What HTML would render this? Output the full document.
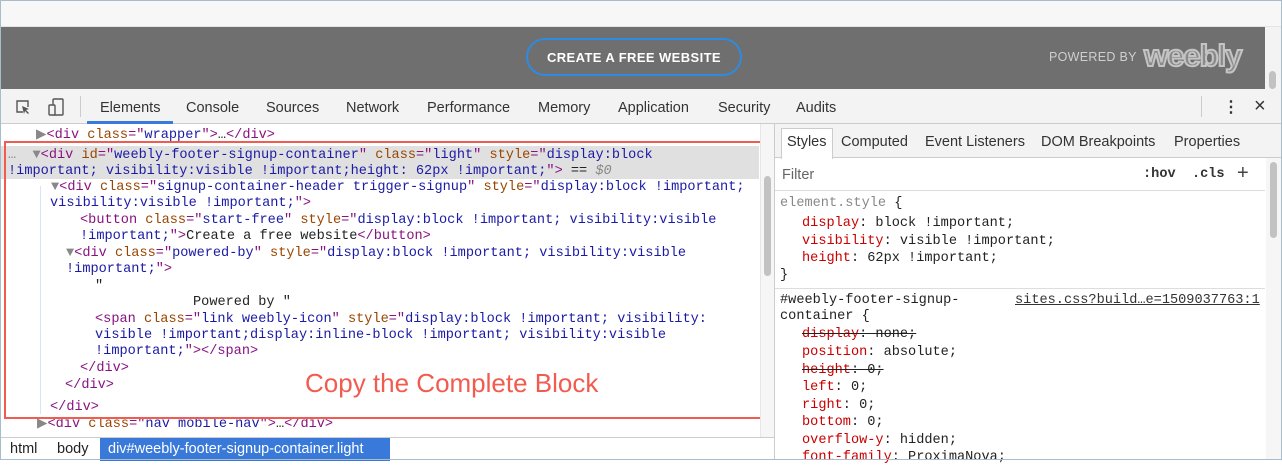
<!DOCTYPE html>
<html><head><meta charset="utf-8">
<style>
*{margin:0;padding:0;box-sizing:border-box}
body{width:1282px;height:460px;overflow:hidden;background:#fff;position:relative;font-family:"Liberation Sans",sans-serif;}
.frame{position:absolute;left:0;top:0;width:1282px;height:460px;border:1px solid #a9bccb;pointer-events:none;z-index:10}
.grey{position:absolute;left:1px;top:27px;width:1264px;height:62px;background:#6f6f6f}
.top{position:absolute;left:1px;top:1px;width:1280px;height:26px;background:#f7f7f7;border-bottom:1px solid #e4e4e4}
.btn{position:absolute;left:526px;top:38px;width:216px;height:38px;border:2px solid #2d8be0;border-radius:20px;color:#fff;font-size:13px;font-weight:bold;text-align:center;line-height:36px;letter-spacing:.4px}
.pb{position:absolute;left:1049px;top:50px;color:#cfcfcf;font-size:12.5px;letter-spacing:.3px}
.wb{position:absolute;left:1144px;top:38px;color:#8a8a8a;font-size:31px;font-weight:bold;-webkit-text-stroke:2px #c4c4c4;letter-spacing:-1px}
.psb{position:absolute;left:1265px;top:27px;width:16px;height:62px;background:#f3f3f3}
.psb i{position:absolute;left:4px;top:44px;width:7px;height:18px;border-radius:4px;background:#c2c2c2}
.tb{position:absolute;left:1px;top:89px;width:1280px;height:35px;background:#f3f3f3;border-bottom:1px solid #ccc;font-size:14.5px;color:#333}
.tb span{position:absolute;top:11px}
.ul{position:absolute;left:87px;top:121px;width:86px;height:3px;background:#3879d9}
.mono{font-family:"Liberation Mono",monospace;font-size:13.6px;white-space:pre;position:absolute;line-height:16px;color:#222}
.t{color:#881280}.a{color:#994500}.v{color:#1a1aa6}.r{color:#c80000}.g{color:#888}
.sel{position:absolute;left:1px;top:146px;width:758px;height:33px;background:#e0e0e0}
.lsb{position:absolute;left:760px;top:124px;width:14px;height:313px;background:#f6f6f6;border-left:1px solid #e6e6e6}
.lsb i{position:absolute;left:3px;top:52px;width:7px;height:100px;border-radius:4px;background:#c2c2c2}
.rp{position:absolute;left:774px;top:124px;width:508px;height:336px;border-left:1px solid #ccc;background:#fff}
.rtabs{position:absolute;left:775px;top:124px;width:506px;height:34px;background:#f3f3f3;border-bottom:1px solid #ccc;font-size:14.5px;color:#333}
.rtabs span{position:absolute;top:10px}
.stab{position:absolute;left:6px;top:4px;width:52px;height:31px;background:#fff;border:1px solid #ccc;border-bottom:none}
.filter{position:absolute;left:775px;top:158px;width:490px;height:33px;border-bottom:1px solid #ddd}
.rsb{position:absolute;left:1266px;top:158px;width:15px;height:302px;background:#f6f6f6}
.rsb i{position:absolute;left:4px;top:4px;width:7px;height:76px;border-radius:4px;background:#c2c2c2}
.box{position:absolute;left:4px;top:141px;width:758px;height:278px;border:2px solid #f25b4f}
.copy{position:absolute;left:305px;top:368px;color:#f25b4f;font-size:26px}
.bc{position:absolute;left:1px;top:437px;width:773px;height:23px;border-top:1px solid #ccc;background:#fff;font-size:14.5px;color:#222}
.bc span{position:absolute;top:3px}
.bcs{position:absolute;left:99px;top:0;width:290px;height:23px;background:#3879d9}
.gut{position:absolute;left:40px;top:186px;width:1px;height:228px;background:#dbe3ee}
</style></head><body>
<div class="top"></div>
<div class="grey"></div>
<div class="btn">CREATE A FREE WEBSITE</div>
<div class="pb">POWERED BY</div>
<div class="wb">weebly</div>
<div class="psb"><i></i></div>

<div class="tb">
<svg style="position:absolute;left:13px;top:9px" width="18" height="18" viewBox="0 0 18 18"><path d="M9 14H3V3h11v6" fill="none" stroke="#555" stroke-width="1.4"/><path d="M8 8l7 3-3 1 3 3-1 1-3-3-1 3z" fill="#555"/></svg>
<svg style="position:absolute;left:46px;top:8px" width="18" height="20" viewBox="0 0 18 20"><rect x="6" y="2" width="10" height="16" rx="1" fill="none" stroke="#555" stroke-width="1.4"/><rect x="2" y="8" width="6" height="10" rx="1" fill="#f3f3f3" stroke="#555" stroke-width="1.4"/></svg>
<div style="position:absolute;left:79px;top:7px;width:1px;height:21px;background:#ccc"></div>
<span style="left:99px">Elements</span><span style="left:185px">Console</span><span style="left:265px">Sources</span><span style="left:345px">Network</span><span style="left:426px">Performance</span><span style="left:537px">Memory</span><span style="left:617px">Application</span><span style="left:717px">Security</span><span style="left:795px">Audits</span>
<div style="position:absolute;left:1200px;top:7px;width:1px;height:21px;background:#ccc"></div>
<span style="left:1222px;top:8px;font-weight:bold;font-size:16px">⋮</span>
<span style="left:1253px;top:6px;font-size:20px">×</span>
</div>
<div class="ul"></div>

<div class="sel"></div>
<div class="gut"></div>
<div class="mono" style="left:36px;top:128px"><span class="g">▶</span><span class="t">&lt;div</span> <span class="a">class</span><span class="t">="</span><span class="v">wrapper</span><span class="t">"&gt;</span>…<span class="t">&lt;/div&gt;</span></div>
<div class="mono" style="left:8px;top:148px"><span class="g">…</span>  <span class="g">▼</span><span class="t">&lt;div</span> <span class="a">id</span><span class="t">="</span><span class="v">weebly-footer-signup-container</span><span class="t">"</span> <span class="a">class</span><span class="t">="</span><span class="v">light</span><span class="t">"</span> <span class="a">style</span><span class="t">="</span><span class="v">display:block</span></div>
<div class="mono" style="left:8px;top:164px"><span class="v">!important; visibility:visible !important;height: 62px !important;</span><span class="t">"&gt;</span> == <i class="g">$0</i></div>
<div class="mono" style="left:51px;top:180px"><span class="g">▼</span><span class="t">&lt;div</span> <span class="a">class</span><span class="t">="</span><span class="v">signup-container-header trigger-signup</span><span class="t">"</span> <span class="a">style</span><span class="t">="</span><span class="v">display:block !important;</span></div>
<div class="mono" style="left:50px;top:196px"><span class="v">visibility:visible !important;</span><span class="t">"&gt;</span></div>
<div class="mono" style="left:80px;top:213px"><span class="t">&lt;button</span> <span class="a">class</span><span class="t">="</span><span class="v">start-free</span><span class="t">"</span> <span class="a">style</span><span class="t">="</span><span class="v">display:block !important; visibility:visible</span></div>
<div class="mono" style="left:80px;top:229px"><span class="v">!important;</span><span class="t">"&gt;</span>Create a free website<span class="t">&lt;/button&gt;</span></div>
<div class="mono" style="left:66px;top:246px"><span class="g">▼</span><span class="t">&lt;div</span> <span class="a">class</span><span class="t">="</span><span class="v">powered-by</span><span class="t">"</span> <span class="a">style</span><span class="t">="</span><span class="v">display:block !important; visibility:visible</span></div>
<div class="mono" style="left:66px;top:262px"><span class="v">!important;</span><span class="t">"&gt;</span></div>
<div class="mono" style="left:95px;top:279px">"</div>
<div class="mono" style="left:193px;top:295px">Powered by "</div>
<div class="mono" style="left:95px;top:312px"><span class="t">&lt;span</span> <span class="a">class</span><span class="t">="</span><span class="v">link weebly-icon</span><span class="t">"</span> <span class="a">style</span><span class="t">="</span><span class="v">display:block !important; visibility:</span></div>
<div class="mono" style="left:95px;top:328px"><span class="v">visible !important;display:inline-block !important; visibility:visible</span></div>
<div class="mono" style="left:95px;top:344px"><span class="v">!important;</span><span class="t">"&gt;&lt;/span&gt;</span></div>
<div class="mono" style="left:80px;top:361px"><span class="t">&lt;/div&gt;</span></div>
<div class="mono" style="left:65px;top:378px"><span class="t">&lt;/div&gt;</span></div>
<div class="mono" style="left:50px;top:400px"><span class="t">&lt;/div&gt;</span></div>
<div class="mono" style="left:37px;top:417px"><span class="g">▶</span><span class="t">&lt;div</span> <span class="a">class</span><span class="t">="</span><span class="v">nav mobile-nav</span><span class="t">"&gt;</span>…<span class="t">&lt;/div&gt;</span></div>
<div class="box"></div>
<div class="copy">Copy the Complete Block</div>
<div class="lsb"><i></i></div>

<div class="bc"><div class="bcs"></div><span style="left:9px">html</span><span style="left:56px">body</span><span style="left:107px;color:#fff">div#weebly-footer-signup-container.light</span></div>

<div class="rp"></div>
<div class="rtabs"><div class="stab"></div><span style="left:12px">Styles</span><span style="left:66px">Computed</span><span style="left:150px">Event Listeners</span><span style="left:266px">DOM Breakpoints</span><span style="left:399px">Properties</span></div>
<div class="filter"><span style="position:absolute;left:7px;top:9px;font-size:14.5px;color:#666">Filter</span>
<span class="mono" style="left:368px;top:9px;font-weight:bold;color:#333">:hov  .cls</span>
<span style="position:absolute;left:462px;top:4px;font-size:20px;color:#444">+</span></div>
<div class="rsb"><i></i></div>
<div class="mono" style="left:780px;top:196px"><span class="g">element.style</span> {</div>
<div class="mono" style="left:802px;top:216px"><span class="r">display</span>: block !important;</div>
<div class="mono" style="left:802px;top:234px"><span class="r">visibility</span>: visible !important;</div>
<div class="mono" style="left:802px;top:251px"><span class="r">height</span>: 62px !important;</div>
<div class="mono" style="left:780px;top:268px">}</div>
<div style="position:absolute;left:775px;top:288px;width:490px;height:1px;background:#ddd"></div>
<div class="mono" style="left:780px;top:293px">#weebly-footer-signup-</div>
<div class="mono" style="left:1015px;top:293px;text-decoration:underline;color:#333">sites.css?build…e=1509037763:1</div>
<div class="mono" style="left:780px;top:309px">container {</div>
<div class="mono" style="left:802px;top:327px;text-decoration:line-through"><span class="r">display</span>: none;</div>
<div class="mono" style="left:802px;top:345px"><span class="r">position</span>: absolute;</div>
<div class="mono" style="left:802px;top:363px;text-decoration:line-through"><span class="r">height</span>: 0;</div>
<div class="mono" style="left:802px;top:380px"><span class="r">left</span>: 0;</div>
<div class="mono" style="left:802px;top:398px"><span class="r">right</span>: 0;</div>
<div class="mono" style="left:802px;top:415px"><span class="r">bottom</span>: 0;</div>
<div class="mono" style="left:802px;top:433px"><span class="r">overflow-y</span>: hidden;</div>
<div class="mono" style="left:802px;top:450px"><span class="r">font-family</span>: ProximaNova;</div>
<div class="frame"></div>
</body></html>
